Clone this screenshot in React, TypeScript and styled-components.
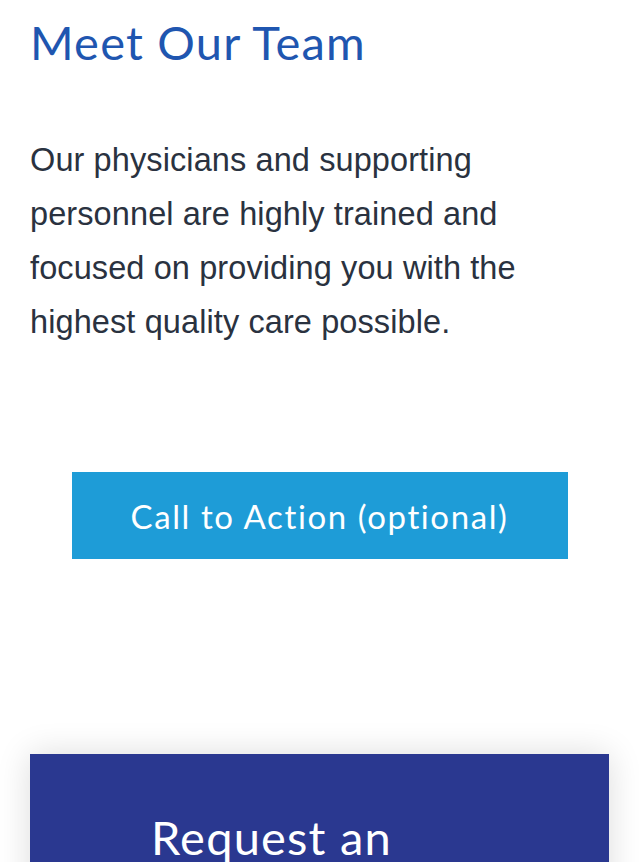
import { FC } from 'react';
import styled, { createGlobalStyle } from 'styled-components';

const GlobalStyle = createGlobalStyle`
  html, body {
    margin: 0;
    padding: 0;
    background: #ffffff;
  }
  body {
    font-family: "Liberation Sans", Arial, sans-serif;
    overflow: hidden;
  }
`;

const Page = styled.main`
  display: flex;
  flex-direction: column;
  padding: 0 30px;
`;

const Heading = styled.h1`
  margin: 14px 0 0;
  font-family: Lato, "Open Sans", sans-serif;
  font-weight: 400;
  font-size: 47px;
  line-height: 56px;
  letter-spacing: 1.2px;
  color: #1f56b0;
`;

const Intro = styled.p`
  margin: 63px 0 0;
  font-family: "Liberation Sans", Arial, sans-serif;
  font-size: 32.5px;
  line-height: 54px;
  letter-spacing: 0.1px;
  color: #2a3240;
  max-width: 540px;
`;

const ButtonRow = styled.div`
  display: flex;
  justify-content: center;
  margin-top: 123px;
`;

const CtaButton = styled.a`
  display: flex;
  align-items: center;
  justify-content: center;
  width: 496px;
  height: 87px;
  background: #1e9cd7;
  color: #ffffff;
  font-family: Lato, "Open Sans", sans-serif;
  font-size: 33px;
  letter-spacing: 1.6px;
  text-decoration: none;
`;

const RequestCard = styled.section`
  margin-top: 195px;
  height: 320px;
  background: #2a3890;
  box-shadow: 0 0 32px rgba(0, 0, 0, 0.14);
  padding: 55px 0 0 121px;
`;

const CardTitle = styled.h2`
  margin: 0;
  font-family: Lato, "Open Sans", sans-serif;
  font-weight: 400;
  font-size: 47px;
  line-height: 56px;
  letter-spacing: 1.2px;
  color: #ffffff;
  max-width: 300px;
`;

const App: FC = () => {
    return (
        <>
            <GlobalStyle />
            <Page>
                <Heading>Meet Our Team</Heading>
                <Intro>
                    Our physicians and supporting personnel are highly trained and
                    focused on providing you with the highest quality care possible.
                </Intro>
                <ButtonRow>
                    <CtaButton href="#">Call to Action (optional)</CtaButton>
                </ButtonRow>
                <RequestCard>
                    <CardTitle>Request an Appointment</CardTitle>
                </RequestCard>
            </Page>
        </>
    );
};

export default App;
